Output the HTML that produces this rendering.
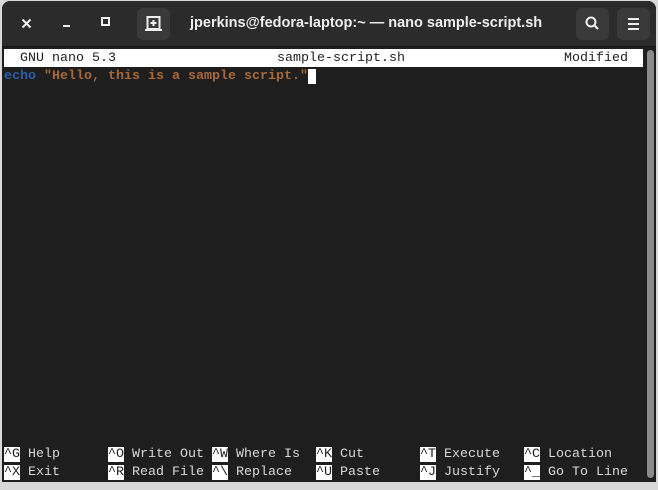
<!DOCTYPE html>
<html><head><style>
body{margin:0;width:658px;height:490px;background:#d9d9d9;overflow:hidden;position:relative;font-family:"Liberation Sans",sans-serif}
.win{position:absolute;left:2px;top:1px;width:654px;height:481px;background:#1e1e1e;border-radius:8px 8px 0 0;overflow:hidden}
.tb{position:absolute;left:0;top:0;width:654px;height:45px;background:#2b2b2b;border-bottom:1px solid #151515}
.title{position:absolute;left:188px;top:14px;color:#eee;font-weight:bold;font-size:14.5px}
.btn{position:absolute;top:7px;width:33px;height:32px;background:#393939;border-radius:6px}
.t{position:absolute;font-family:"Liberation Mono",monospace;font-size:13.33px;line-height:18px;white-space:pre;color:#d8d8d8}
.inv{background:#fff;color:#1e1e1e}
</style></head><body>
<div class="win">
<div class="tb">
 <svg style="position:absolute;left:19px;top:17px" width="11" height="11"><path d="M1.5 1.5L9.5 9.5M9.5 1.5L1.5 9.5" stroke="#eee" stroke-width="2"/></svg>
 <div style="position:absolute;left:61px;top:24px;width:7px;height:2px;background:#eee"></div>
 <div style="position:absolute;left:99px;top:16px;width:5px;height:5px;border:2px solid #eee"></div>
 <div class="btn" style="left:135px"><svg width="33" height="32"><rect x="10.5" y="9" width="12" height="12" fill="none" stroke="#eee" stroke-width="2"/><path d="M8 22H25" stroke="#eee" stroke-width="2"/><path d="M16.5 12V18M13.5 15H19.5" stroke="#eee" stroke-width="2"/></svg></div>
 <div class="title">jperkins@fedora-laptop:~ — nano sample-script.sh</div>
 <div class="btn" style="left:574px"><svg width="33" height="32"><circle cx="15" cy="14" r="4.5" fill="none" stroke="#eee" stroke-width="2"/><path d="M18 17L22 21" stroke="#eee" stroke-width="2.2"/></svg></div>
 <div class="btn" style="left:615px"><svg width="33" height="32"><path d="M11 11H22M11 16H22M11 21H22" stroke="#eee" stroke-width="2"/></svg></div>
</div>
<div style="position:absolute;left:2px;top:48px;width:639px;height:18px;background:#fff"></div>
<div class="t" style="left:18px;top:49px;color:#1e1e1e">GNU nano 5.3</div>
<div class="t" style="left:275px;top:49px;color:#1e1e1e">sample-script.sh</div>
<div class="t" style="left:562px;top:49px;color:#1e1e1e">Modified</div>
<div class="t" style="left:2px;top:67px;font-weight:bold"><span style="color:#2a5ea8">echo</span> <span style="color:#a8693a">"Hello, this is a sample script."</span><span class="inv"> </span></div>
<div class="t" style="left:2px;top:445px"><span class="inv">^G</span> Help</div>
<div class="t" style="left:106px;top:445px"><span class="inv">^O</span> Write Out</div>
<div class="t" style="left:210px;top:445px"><span class="inv">^W</span> Where Is</div>
<div class="t" style="left:314px;top:445px"><span class="inv">^K</span> Cut</div>
<div class="t" style="left:418px;top:445px"><span class="inv">^T</span> Execute</div>
<div class="t" style="left:522px;top:445px"><span class="inv">^C</span> Location</div>
<div class="t" style="left:2px;top:463px"><span class="inv">^X</span> Exit</div>
<div class="t" style="left:106px;top:463px"><span class="inv">^R</span> Read File</div>
<div class="t" style="left:210px;top:463px"><span class="inv">^\</span> Replace</div>
<div class="t" style="left:314px;top:463px"><span class="inv">^U</span> Paste</div>
<div class="t" style="left:418px;top:463px"><span class="inv">^J</span> Justify</div>
<div class="t" style="left:522px;top:463px"><span class="inv">^_</span> Go To Line</div>
<div style="position:absolute;left:645px;top:49px;width:7px;height:428px;background:#8a8a8a;border-radius:4px"></div>
</div>
</body></html>
